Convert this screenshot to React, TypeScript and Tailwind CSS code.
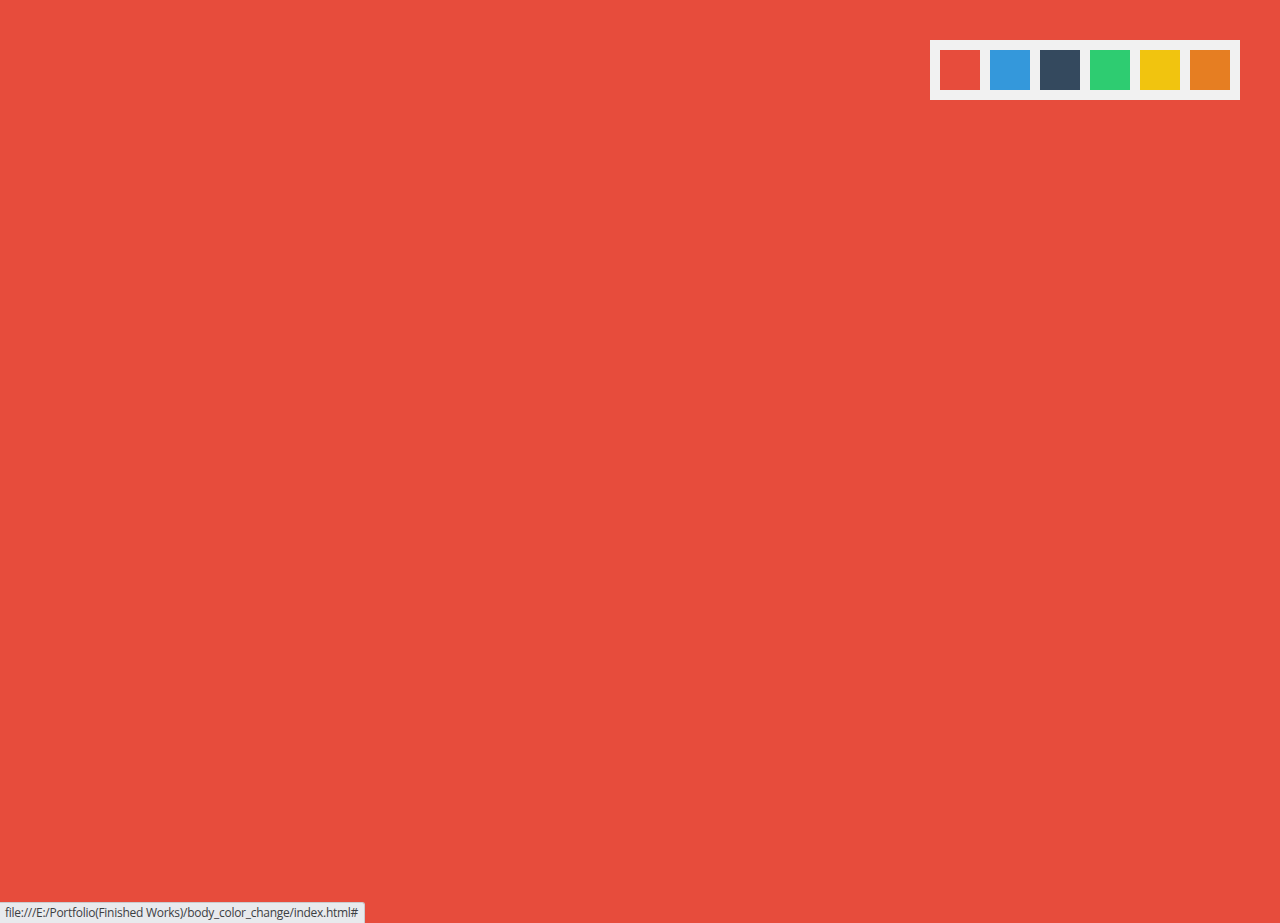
import React from "react";

const colors = ["#e74c3c", "#3498db", "#34495e", "#2ecc71", "#f1c40f", "#e67e22"];

export default function App() {
  return (
    <div className="relative h-[923px] w-full overflow-hidden bg-[#e74c3c]">
      <div className="flex justify-end pt-[40px] pr-[40px]">
        <div className="flex gap-[10px] bg-[#f1f1f1] p-[10px]">
          {colors.map((c) => (
            <a key={c} href="#" className="block h-[40px] w-[40px]" style={{ backgroundColor: c }} />
          ))}
        </div>
      </div>
      <div className="absolute bottom-0 left-0 h-[21px] rounded-tr-[3px] border-t border-r border-[#c9cbce] bg-[#e8eaed] pl-[5px] pr-[6px] text-[12px] leading-[20px] tracking-[-0.27px] text-[#3c4043] [font-family:'Open_Sans',sans-serif]">
        file:///E:/Portfolio(Finished Works)/body_color_change/index.html#
      </div>
    </div>
  );
}
